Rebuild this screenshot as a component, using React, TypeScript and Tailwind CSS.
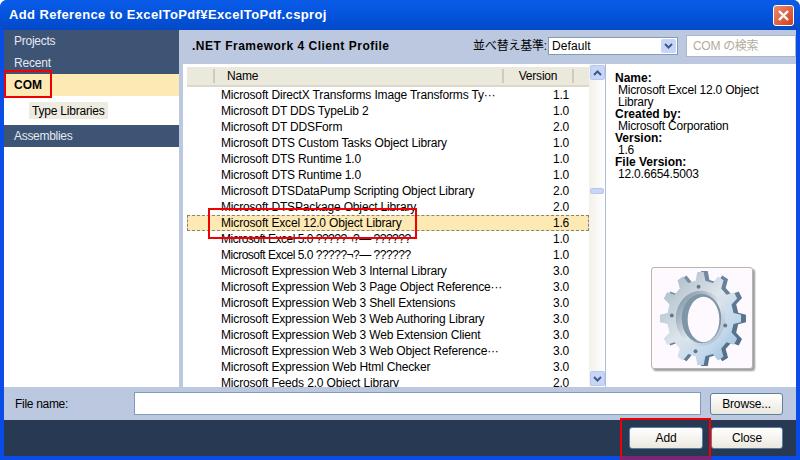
import React from "react";

const rows: [string, string, boolean?][] = [
  ["Microsoft DirectX Transforms Image Transforms Ty···", "1.1"],
  ["Microsoft DT DDS TypeLib 2", "1.0"],
  ["Microsoft DT DDSForm", "2.0"],
  ["Microsoft DTS Custom Tasks Object Library", "1.0"],
  ["Microsoft DTS Runtime 1.0", "1.0"],
  ["Microsoft DTS Runtime 1.0", "1.0"],
  ["Microsoft DTSDataPump Scripting Object Library", "2.0"],
  ["Microsoft DTSPackage Object Library", "2.0"],
  ["Microsoft Excel 12.0 Object Library", "1.6"],
  ["Microsoft Excel 5.0 ?????¬?— ??????", "1.0", true],
  ["Microsoft Excel 5.0 ?????¬?— ??????", "1.0", true],
  ["Microsoft Expression Web 3 Internal Library", "3.0"],
  ["Microsoft Expression Web 3 Page Object Reference···", "3.0"],
  ["Microsoft Expression Web 3 Shell Extensions", "3.0"],
  ["Microsoft Expression Web 3 Web Authoring Library", "3.0"],
  ["Microsoft Expression Web 3 Web Extension Client", "3.0"],
  ["Microsoft Expression Web 3 Web Object Reference···", "3.0"],
  ["Microsoft Expression Web Html Checker", "3.0"],
  ["Microsoft Feeds 2.0 Object Library", "2.0"],
];

function gearPoints(cx: number, cy: number, rx: number, ry: number, teeth: number) {
  const pts: string[] = [];
  for (let i = 0; i < teeth; i++) {
    const a = (i / teeth) * Math.PI * 2;
    const s = (Math.PI * 2) / teeth;
    const prof: [number, number][] = [
      [-0.28, 0.82],
      [-0.15, 1],
      [0.15, 1],
      [0.28, 0.82],
    ];
    for (const [o, r] of prof) {
      const t = a + o * s;
      pts.push(`${(cx + Math.cos(t) * rx * r).toFixed(1)},${(cy + Math.sin(t) * ry * r).toFixed(1)}`);
    }
  }
  return pts.join(" ");
}

function Gear() {
  return (
    <svg width="100" height="100" viewBox="0 0 101 101">
      <defs>
        <linearGradient id="face" x1="0.1" y1="0.1" x2="0.9" y2="0.95">
          <stop offset="0" stopColor="#aebdc9" />
          <stop offset="0.45" stopColor="#dde5ec" />
          <stop offset="0.75" stopColor="#c2d8ec" />
          <stop offset="1" stopColor="#9dbcd8" />
        </linearGradient>
        <linearGradient id="side" x1="0" y1="0" x2="1" y2="1">
          <stop offset="0" stopColor="#8296a8" />
          <stop offset="1" stopColor="#4a6785" />
        </linearGradient>
        <linearGradient id="ring" x1="0" y1="0" x2="1" y2="1">
          <stop offset="0" stopColor="#6f8598" />
          <stop offset="0.55" stopColor="#dfe7ee" />
          <stop offset="1" stopColor="#9fb3c4" />
        </linearGradient>
      </defs>
      <polygon points={gearPoints(53, 51, 42, 48, 12)} fill="url(#side)" />
      <polygon points={gearPoints(49, 51, 41, 47, 12)} fill="url(#face)" />
      <ellipse cx="49" cy="51" rx="25" ry="28" fill="url(#ring)" />
      <ellipse cx="50" cy="51" rx="20" ry="25" fill="#7f95a8" />
      <ellipse cx="52" cy="52" rx="16" ry="23" fill="#fdf9fe" />
      <circle cx="47" cy="19" r="2" fill="#63798f" />
      <circle cx="20" cy="48" r="2" fill="#63798f" />
      <circle cx="74" cy="58" r="2" fill="#63798f" />
      <circle cx="44" cy="84" r="2" fill="#63798f" />
    </svg>
  );
}

function Chevron({ up }: { up?: boolean }) {
  return (
    <svg width="9" height="6" viewBox="0 0 9 6">
      <path d={up ? "M1 5 L4.5 1.5 L8 5" : "M1 1 L4.5 4.5 L8 1"} fill="none" stroke="#3d5a8c" strokeWidth="2" />
    </svg>
  );
}

function ScrollBtn({ up }: { up?: boolean }) {
  return (
    <div className="w-[15px] h-[15px] mx-auto rounded-[2px] border border-[#b5c9ee] bg-[#c7d6f7] flex items-center justify-center">
      <Chevron up={up} />
    </div>
  );
}

function XButton({ label, cls }: { label: string; cls: string }) {
  return (
    <div
      className={`h-[22px] rounded-[3px] border border-[#5f7f9e] bg-gradient-to-b from-white to-[#ebe8de] flex items-center justify-center text-[12px] tracking-[-0.15px] text-black ${cls}`}
    >
      {label}
    </div>
  );
}

export default function App() {
  return (
    <div
      className="relative w-[800px] h-[460px] flex flex-col overflow-hidden bg-[#0a4ce6] text-[12px] text-black rounded-t-[7px]"
      style={{ fontFamily: '"Liberation Sans", "Noto Sans CJK JP", sans-serif' }}
    >
      {/* Title */}
      <div className="h-[30px] shrink-0 flex items-center justify-between pl-[9px] pr-[6px] bg-gradient-to-b from-[#0a5ce8] via-[#0453dc] to-[#0349c8]">
        <span className="text-white font-bold text-[13px] tracking-[0.38px] whitespace-pre">Add Reference to ExcelToPdf¥ExcelToPdf.csproj</span>
        <div className="w-[21px] h-[21px] rounded-[3px] border border-white bg-gradient-to-br from-[#ec8a6c] to-[#cf3b12] flex items-center justify-center">
          <svg width="13" height="13" viewBox="0 0 13 13">
            <path d="M2 2 L11 11 M11 2 L2 11" stroke="#fff" strokeWidth="2.4" />
          </svg>
        </div>
      </div>

      {/* Body */}
      <div className="flex-1 mx-[4px] mb-[4px] flex flex-col min-h-0">
        <div className="h-[357px] flex shrink-0">
          {/* Left nav */}
          <div className="w-[175px] shrink-0 flex flex-col bg-white text-[12px]">
            <div className="h-[22px] bg-[#3d5475] text-[#e4e9f2] flex items-center pl-[10px] tracking-[-0.25px]">Projects</div>
            <div className="h-[22px] bg-[#3d5475] text-[#e4e9f2] flex items-center pl-[10px] tracking-[-0.2px]">Recent</div>
            <div className="h-[22px] bg-[#fde9b4] font-bold flex items-center pl-[10px]">COM</div>
            <div className="h-[29px] flex items-center pl-[25px]">
              <span className="bg-[#eeebe0] h-[17px] flex items-center px-[3px] tracking-[-0.2px]">Type Libraries</span>
            </div>
            <div className="h-[22px] bg-[#3d5475] text-[#e4e9f2] flex items-center pl-[10px] tracking-[-0.3px]">Assemblies</div>
          </div>

          {/* Center */}
          <div className="flex-1 flex flex-col bg-[#bcc8e0] min-w-0">
            <div className="h-[34px] shrink-0 flex items-center pl-[13px]">
              <span className="font-bold tracking-[0.5px] mt-[-3px]">.NET Framework 4 Client Profile</span>
              <span className="ml-auto text-[12px] mt-[-2px] mr-[1px] tracking-[-0.2px]">並べ替え基準:</span>
              <div className="w-[130px] h-[18px] mt-[-2px] bg-white border border-[#7f9db9] flex items-center justify-between pl-[3px] pr-[1px]">
                <span className="tracking-[0.1px]">Default</span>
                <div className="w-[15px] h-[14px] rounded-[2px] bg-[#c7d6f7] flex items-center justify-center">
                  <Chevron />
                </div>
              </div>
              <div className="w-[110px] h-[22px] ml-[8px] mt-[-2px] bg-white border border-[#a9b7c9] flex items-center pl-[6px] text-[#b0ad9c] tracking-[-0.3px]">
                COM の検索
              </div>
            </div>
            <div className="flex-1 flex ml-[4px] min-h-0">
              {/* List */}
              <div className="w-[406px] shrink-0 bg-white pl-[4px] pt-[3px] flex flex-col overflow-hidden">
                <div className="h-[20px] shrink-0 flex items-center bg-[#ebe8dc] border-b-2 border-[#dcd9cc]">
                  <div className="w-[28px] h-[14px] border-r-2 border-[#cfcbbc]" />
                  <div className="w-[289px] h-[14px] border-r-2 border-[#cfcbbc] pl-[12px] flex items-center tracking-[-0.2px]">Name</div>
                  <div className="w-[70px] h-[14px] border-r-2 border-[#cfcbbc] flex items-center justify-center tracking-[-0.2px]">Version</div>
                </div>
                <div className="flex-1 overflow-hidden pt-0">
                  {rows.map(([n, v, tight], i) => (
                    <div
                      key={i}
                      className={
                        i === 8
                          ? "h-[16px] flex items-center bg-[#fde9b4] outline outline-1 outline-dashed outline-[#8a8468] -outline-offset-1"
                          : "h-[16px] flex items-center"
                      }
                    >
                      <span
                        className={
                          tight
                            ? "w-[354px] shrink-0 pl-[34px] whitespace-nowrap overflow-hidden tracking-[-0.5px]"
                            : "w-[354px] shrink-0 pl-[34px] whitespace-nowrap overflow-hidden tracking-[-0.16px]"
                        }
                      >
                        {n}
                      </span>
                      <span className="w-[40px] shrink-0 text-center tracking-[-0.2px]">{v}</span>
                    </div>
                  ))}
                </div>
              </div>
              {/* Scrollbar */}
              <div className="w-[17px] shrink-0 bg-gradient-to-r from-[#f4f1ea] to-white border-r border-[#a9bde0] flex flex-col pt-[1px] pb-[1px]">
                <ScrollBtn up />
                <div className="flex-1 min-h-0 pt-[108px]">
                  <div className="w-[14px] h-[6px] mx-auto rounded-[2px] bg-[#c7d6f7] border border-[#b5c9ee]" />
                </div>
                <ScrollBtn />
              </div>
              {/* Detail */}
              <div className="flex-1 bg-white pl-[9px] pt-[8px] leading-[12px] tracking-[-0.2px] flex flex-col">
                <div className="font-bold tracking-[0px]">Name:</div>
                <div className="pl-[3px]">Microsoft Excel 12.0 Object</div>
                <div className="pl-[3px]">Library</div>
                <div className="font-bold tracking-[0px]">Created by:</div>
                <div className="pl-[3px]">Microsoft Corporation</div>
                <div className="font-bold tracking-[0px]">Version:</div>
                <div className="pl-[3px]">1.6</div>
                <div className="font-bold tracking-[0px]">File Version:</div>
                <div className="pl-[3px]">12.0.6654.5003</div>
                <div className="mt-[87px] ml-[36px] w-[102px] h-[102px] rounded-[3px] border border-[#b9b6b2] bg-[#fdf9fe] shadow-[2px_2px_2px_#9a9a9a]">
                  <Gear />
                </div>
              </div>
            </div>
          </div>
        </div>

        {/* File name */}
        <div className="h-[33px] shrink-0 bg-[#bcc8e0] flex items-center pl-[11px] pr-[13px]">
          <span className="w-[119px] shrink-0 tracking-[-0.3px]">File name:</span>
          <div className="flex-1 h-[23px] mt-[-1px] bg-white border border-[#7f9db9]" />
          <XButton label="Browse..." cls="w-[73px] ml-[9px]" />
        </div>

        {/* Footer */}
        <div className="flex-1 bg-[#283a53] flex items-start justify-end pt-[7px] pr-[13px] gap-[8px]">
          <XButton label="Add" cls="w-[74px]" />
          <XButton label="Close" cls="w-[72px]" />
        </div>
      </div>

      {/* Red annotation boxes */}
      <div className="absolute left-[4px] top-[70px] w-[48px] h-[28px] border-[2px] border-[#f00000]" />
      <div className="absolute left-[208px] top-[208px] w-[209px] h-[31px] border-[2px] border-[#f00000]" />
      <div className="absolute left-[620px] top-[418px] w-[91px] h-[41px] border-[2px] border-[#f00000]" />
    </div>
  );
}
